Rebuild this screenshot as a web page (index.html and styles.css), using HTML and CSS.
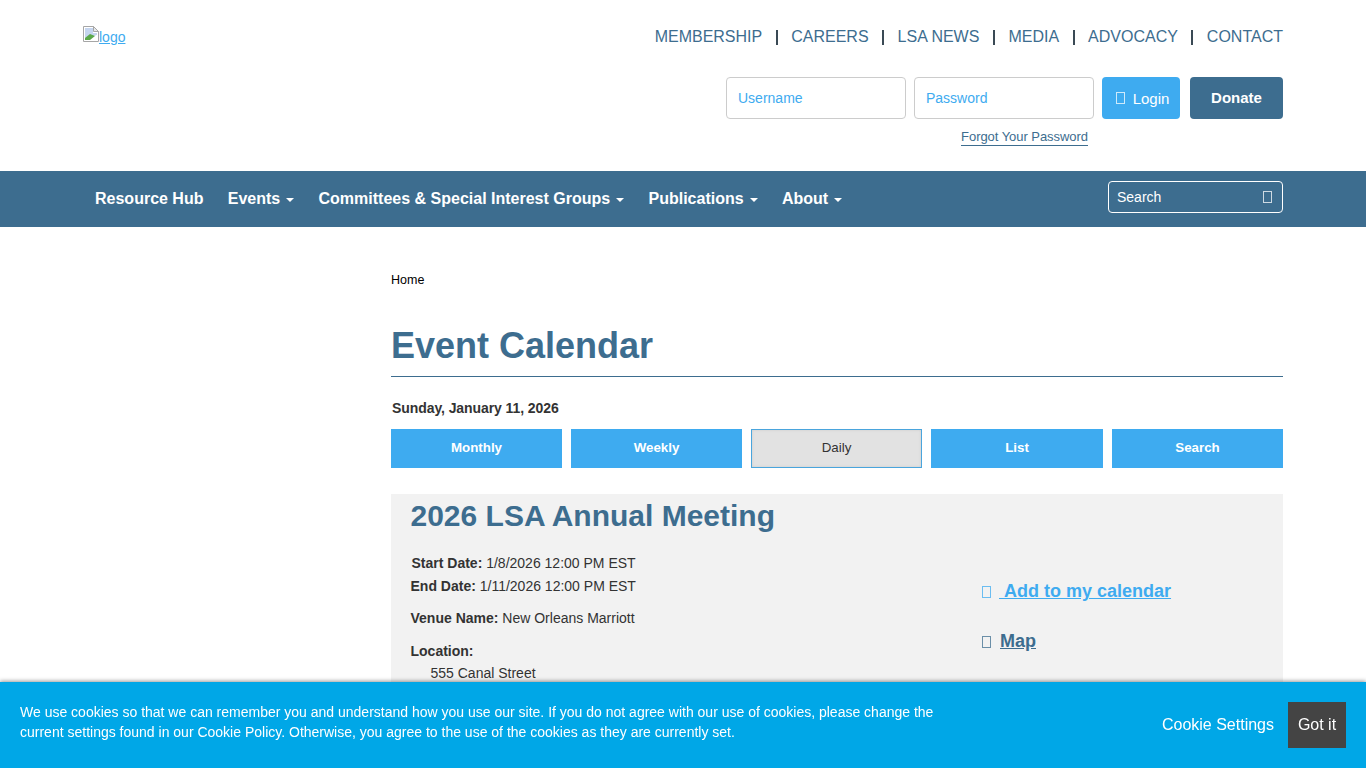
FILE: index.html
```html
<!DOCTYPE html>
<html lang="en">
<head>
    <meta charset="UTF-8">
    <meta name="viewport" content="width=device-width, initial-scale=1.0">
    <title>Event Calendar</title>
    <link rel="stylesheet" href="styles.css">
</head>
<body>
    <header class="site-header">
        <a class="logo" href="#">
            <svg class="broken-img" width="16" height="16" viewBox="0 0 16 16">
                <path d="M.5.5h10l5 5v10H.5z" fill="#fff" stroke="#a6a6a6"/>
                <path d="M10.5.5v5h5z" fill="#e8e8e8" stroke="#a6a6a6"/>
                <path d="M2 2h8v5h4v2l-12 4z" fill="#c5d5ef"/>
                <path d="M2 14v-2l5-4 5 2-5 4z" fill="#5ba84a"/>
                <path d="M8 15l7-7v7z" fill="#fff"/>
            </svg><span>logo</span>
        </a>
        <div class="header-right">
            <nav class="top-links">
                <a href="#">MEMBERSHIP</a><i></i>
                <a href="#">CAREERS</a><i></i>
                <a href="#">LSA NEWS</a><i></i>
                <a href="#">MEDIA</a><i></i>
                <a href="#">ADVOCACY</a><i></i>
                <a href="#">CONTACT</a>
            </nav>
            <form class="login">
                <div class="login-row">
                    <input type="text" placeholder="Username">
                    <input type="password" placeholder="Password">
                    <button type="button" class="btn-login"><span class="tofu"></span>Login</button>
                    <button type="button" class="btn-donate">Donate</button>
                </div>
                <div class="forgot-row"><a href="#">Forgot Your Password</a></div>
            </form>
        </div>
    </header>

    <div class="main-nav">
        <div class="main-nav-inner">
            <ul class="menu">
                <li>Resource Hub</li>
                <li>Events<b class="caret"></b></li>
                <li>Committees &amp; Special Interest Groups<b class="caret"></b></li>
                <li>Publications<b class="caret"></b></li>
                <li>About<b class="caret"></b></li>
            </ul>
            <div class="nav-search"><span>Search</span><span class="tofu"></span></div>
        </div>
    </div>

    <main class="content">
        <div class="breadcrumb">Home</div>
        <h1>Event Calendar</h1>
        <div class="cal-date">Sunday, January 11, 2026</div>
        <div class="cal-tabs">
            <a class="cal-tab" href="#">Monthly</a>
            <a class="cal-tab" href="#">Weekly</a>
            <a class="cal-tab active" href="#">Daily</a>
            <a class="cal-tab" href="#">List</a>
            <a class="cal-tab" href="#">Search</a>
        </div>
        <section class="event">
            <h2>2026 LSA Annual Meeting</h2>
            <div class="event-body">
                <div class="event-info">
                    <p class="date-line start"><strong>Start Date:</strong> 1/8/2026 12:00 PM EST</p>
                    <p class="date-line"><strong>End Date:</strong> 1/11/2026 12:00 PM EST</p>
                    <p class="venue"><strong>Venue Name:</strong> New Orleans Marriott</p>
                    <p class="location"><strong>Location:</strong></p>
                    <p class="address">555 Canal Street</p>
                </div>
                <div class="event-actions">
                    <div class="action add"><span class="tofu"></span><a href="#">&nbsp;Add to my calendar</a></div>
                    <div class="action map"><span class="tofu"></span><a href="#">Map</a></div>
                </div>
            </div>
        </section>
    </main>

    <div class="cookie-bar">
        <p>We use cookies so that we can remember you and understand how you use our site. If you do not agree with our use of cookies, please change the current settings found in our Cookie Policy. Otherwise, you agree to the use of the cookies as they are currently set.</p>
        <div class="cookie-actions">
            <a href="#">Cookie Settings</a>
            <button type="button">Got it</button>
        </div>
    </div>
</body>
</html>
```

FILE: styles.css
```css
* {
    box-sizing: border-box;
}
html, body {
    height: 768px;
    overflow: hidden;
}
body {
    margin: 0;
    font-family: "Liberation Sans", Arial, sans-serif;
    font-size: 14px;
    color: #333;
    background-color: #fff;
}
a {
    color: #3eabf0;
}
.tofu {
    display: inline-block;
    width: 9px;
    height: 12px;
    border: 1px solid currentColor;
    opacity: .75;
}

/* header */
.site-header {
    display: flex;
    justify-content: space-between;
    width: 1200px;
    height: 171px;
    margin-left: 83px;
}
.logo {
    display: flex;
    align-items: flex-start;
    height: 20px;
    margin-top: 26px;
    font-size: 14px;
    line-height: 22px;
}
.broken-img {
    display: block;
}
.header-right {
    display: flex;
    flex-direction: column;
    align-items: flex-end;
}
.top-links {
    display: flex;
    align-items: center;
    height: 20px;
    margin-top: 27px;
}
.top-links a {
    color: #3d6d8f;
    font-size: 16px;
    text-decoration: none;
}
.top-links i {
    width: 2px;
    height: 15px;
    margin: 0 13.5px;
    background-color: #3a4a55;
}
.login {
    margin-top: 30px;
}
.login-row {
    display: flex;
}
.login-row input {
    width: 180px;
    height: 42px;
    margin-right: 8px;
    padding: 0 11px;
    border: 1px solid #ccc;
    border-radius: 4px;
    font-family: inherit;
    font-size: 14px;
}
.login-row input::placeholder {
    color: #3eabf0;
    opacity: 1;
}
.login-row button {
    height: 42px;
    border: 0;
    border-radius: 4px;
    color: #fff;
    font-family: inherit;
}
.btn-login {
    width: 78px;
    margin-right: 10px;
    padding: 0 0 0 3px;
    background-color: #3eabf0;
    font-size: 15px;
}
.btn-login .tofu {
    margin-right: 8px;
    vertical-align: 0;
}
.btn-donate {
    width: 93px;
    padding: 0 0 2px;
    background-color: #3d6d8f;
    font-size: 15px;
    font-weight: bold;
}
.forgot-row {
    width: 368px;
    margin-top: 9px;
    padding-right: 6px;
    text-align: right;
}
.forgot-row a {
    display: inline-block;
    color: #3d6d8f;
    font-size: 13px;
    letter-spacing: -.05px;
    line-height: 16px;
    border-bottom: 1px solid #3d6d8f;
    text-decoration: none;
}

/* blue nav */
.main-nav {
    height: 56px;
    background-color: #3d6d8f;
}
.main-nav-inner {
    display: flex;
    justify-content: space-between;
    align-items: center;
    width: 1200px;
    height: 56px;
    margin-left: 83px;
}
.menu {
    display: flex;
    gap: 24.3px;
    margin: 0;
    padding: 0 0 0 12px;
    list-style: none;
    color: #fff;
    font-size: 16px;
    font-weight: bold;
}
.caret {
    display: inline-block;
    margin-left: 6px;
    vertical-align: middle;
    border-top: 4px solid #fff;
    border-left: 4px solid transparent;
    border-right: 4px solid transparent;
}
.nav-search {
    display: flex;
    justify-content: space-between;
    align-items: center;
    width: 175px;
    height: 32px;
    margin-bottom: 4px;
    padding: 0 10px 0 8px;
    border: 1px solid #fff;
    border-radius: 4px;
    color: #fff;
    font-size: 14px;
}

/* page content */
.content {
    width: 892px;
    margin-left: 391px;
}
.breadcrumb {
    padding-top: 45px;
    color: #000;
    font-size: 12.5px;
    line-height: 16px;
}
h1 {
    margin: 37px 0 0;
    padding-bottom: 10px;
    border-bottom: 1px solid #3d6d8f;
    color: #3d6d8f;
    font-size: 36px;
    line-height: 41px;
}
.cal-date {
    margin: 24px 0 0 1px;
    color: #333;
    font-size: 14px;
    font-weight: bold;
    letter-spacing: -.08px;
    line-height: 14px;
}
.cal-tabs {
    display: grid;
    grid-template-columns: 171px 171px 171px 172px 171px;
    gap: 9px;
    margin-top: 14px;
}
.cal-tab {
    height: 39px;
    background-color: #3eabf0;
    color: #fff;
    font-size: 13.33px;
    font-weight: bold;
    line-height: 38px;
    text-align: center;
    text-decoration: none;
}
.cal-tab.active {
    border: 1px solid #4aa5dd;
    background-color: #e2e2e2;
    box-shadow: inset 0 0 3px #ccc;
    color: #333;
    font-weight: normal;
    line-height: 36px;
}
.event {
    height: 300px;
    margin-top: 26px;
    padding: 0 20px 0 19.5px;
    background-color: #f2f2f2;
}
h2 {
    margin: 0;
    padding-top: 4px;
    color: #3d6d8f;
    font-size: 30px;
    line-height: 36px;
}
.event-body {
    display: flex;
}
.event-info {
    width: 571.5px;
    padding-top: 19px;
}
.event-info p {
    margin: 0;
    line-height: 20px;
}
.date-line {
    height: 23px;
}
.date-line.start {
    padding-left: 1px;
}
.event-info .venue {
    margin-top: 9px;
}
.event-info .location {
    margin-top: 13px;
    height: 22px;
}
.event-info .address {
    padding-left: 20px;
}
.event-actions {
    padding-top: 45px;
    font-size: 18px;
    font-weight: bold;
}
.action {
    height: 50px;
    line-height: 24px;
}
.action .tofu {
    margin-right: 8px;
    vertical-align: -1px;
}
.action.add {
    color: #3eabf0;
}
.action.map .tofu {
    margin-right: 9px;
}
.action.map, .action.map a {
    color: #3d6d8f;
}

/* cookie bar */
.cookie-bar {
    position: fixed;
    left: 0;
    right: 0;
    bottom: 0;
    display: flex;
    justify-content: space-between;
    align-items: center;
    height: 86px;
    padding: 0 20px;
    background-color: #00a7e7;
    box-shadow: 0 -1px 4px rgba(0, 0, 0, .4);
    color: #fff;
}
.cookie-bar p {
    width: 930px;
    margin: 0 0 6px;
    line-height: 20px;
}
.cookie-actions {
    display: flex;
    align-items: center;
    gap: 14px;
}
.cookie-actions a {
    color: #fff;
    font-size: 16px;
    text-decoration: none;
}
.cookie-actions button {
    width: 58px;
    height: 46px;
    border: 0;
    background-color: #444;
    color: #fff;
    font-family: inherit;
    font-size: 16px;
}
```
